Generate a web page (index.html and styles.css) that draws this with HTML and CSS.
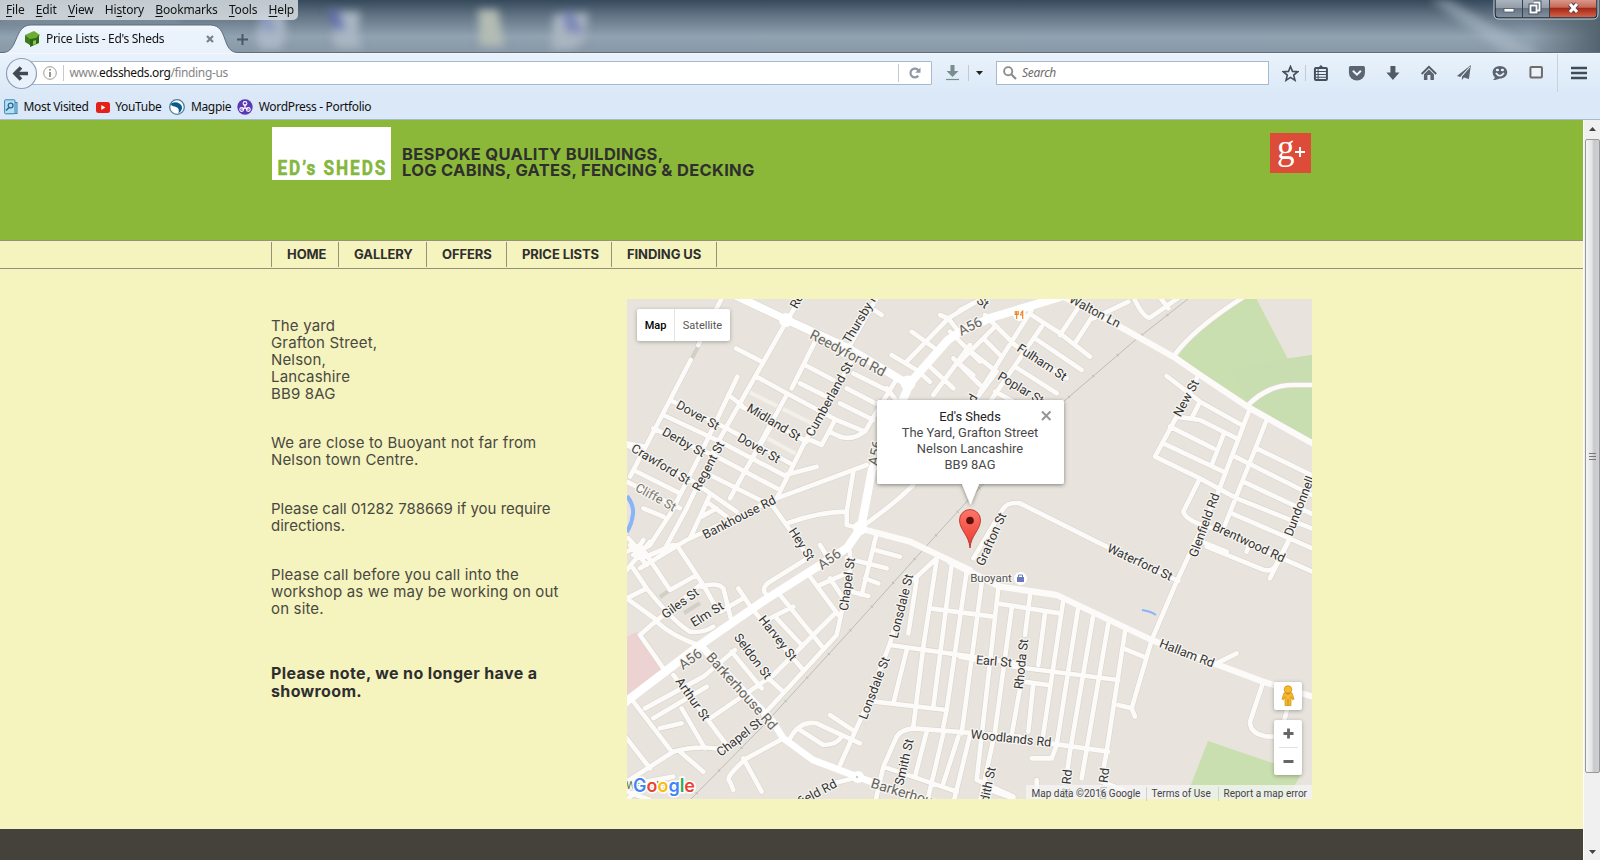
FILE: index.html
```html
<!DOCTYPE html>
<html lang="en">
<head>
<meta charset="utf-8">
<title>Price Lists - Ed's Sheds</title>
<link rel="stylesheet" href="styles.css">
</head>
<body>
<div class="window">
  <header class="titlebar">
    <svg class="glass" viewBox="0 0 1600 54" preserveAspectRatio="none">
      <defs>
        <linearGradient id="gGlass" x1="0" y1="0" x2="0" y2="1"><stop offset="0" stop-color="#364a5c"/><stop offset=".3" stop-color="#647686"/><stop offset=".68" stop-color="#91a2b1"/><stop offset="1" stop-color="#8797a5"/></linearGradient>
        <linearGradient id="gEdge" x1="0" x2="1"><stop offset="0" stop-color="#53606a" stop-opacity="0"/><stop offset="1" stop-color="#53636f"/></linearGradient>
        <filter id="soft" x="-40%" y="-40%" width="180%" height="180%"><feGaussianBlur stdDeviation="4"/></filter>
        <linearGradient id="gTab" x1="0" y1="0" x2="0" y2="1"><stop offset="0" stop-color="#f3f8fd"/><stop offset=".3" stop-color="#eaf2fb"/><stop offset="1" stop-color="#e9f2fb"/></linearGradient>
      </defs>
      <rect width="1600" height="54" fill="url(#gGlass)"/>
      <rect width="180" height="22" fill="#8d9aa4" opacity=".6" filter="url(#soft)"/>
      <rect x="1530" width="70" height="54" fill="url(#gEdge)"/>
      <g filter="url(#soft)">
        <path d="M1430 0h20l90 54h-34z" fill="#b4c0cc" opacity=".5"/>
        <path d="M262 14h22l2 22-6 13h-20l-4-12z" fill="#aab7c6"/><path d="M256 12h14l8 18-14 2z" fill="#7f8ebb" opacity=".7"/>
        <path d="M338 12h22l-2 22 4 14h-26l-4-12z" fill="#a9b6c3"/><path d="M326 10h14l6 20h-12z" fill="#5f6cab" opacity=".8"/>
        <path d="M478 10h20l6 36h-24z" fill="#b4bcb4"/>
        <path d="M554 15l34-2-3 26-12 10h-22z" fill="#aab5c1"/><path d="M562 12h12l10 22-18-2z" fill="#727db4" opacity=".8"/>
      </g>
      <path d="M0 52.500H3C18 52.500 14 26 30 25H211C229 26 221 52.500 238 52.500H1600V54H0Z" fill="url(#gTab)" stroke="#5d6d80"/>
      <rect y="53" width="1600" height="1" fill="#f2f7fc"/>
    </svg>
    <nav class="menus"><span><u>F</u>ile</span><span><u>E</u>dit</span><span><u>V</u>iew</span><span>Hi<u>s</u>tory</span><span><u>B</u>ookmarks</span><span><u>T</u>ools</span><span><u>H</u>elp</span></nav>
    <div class="tabs">
      <svg width="16" height="16" viewBox="0 0 16 16"><path d="M1 4L10 0l6 4-4 5L5 8z" fill="#6cab35"/><path d="M1 4l5 4v6l-5-3z" fill="#3d7a1c"/><path d="M6 8l6-1 3-3v8l-9 4z" fill="#2f6716"/><path d="M9 10l3-1v4l-3 1z" fill="#8cc653"/></svg>
      <span class="tab-title">Price Lists - Ed's Sheds</span>
      <svg width="8" height="8" viewBox="0 0 8 8"><path d="M1 1l6 6M7 1L1 7" stroke="#76828e" stroke-width="2.200"/></svg>
      <svg class="plus" width="11" height="11" viewBox="0 0 11 11"><path d="M5.500 0v11M0 5.500h11" stroke="#4b5864" stroke-width="2"/></svg>
    </div>
    <svg class="winbtns" width="106" height="20" viewBox="0 0 106 20">
      <defs><linearGradient id="gBtn" x1="0" y1="0" x2="0" y2="1"><stop offset="0" stop-color="#aeb8c1"/><stop offset=".45" stop-color="#929eaa"/><stop offset=".5" stop-color="#667584"/><stop offset="1" stop-color="#8592a0"/></linearGradient>
      <linearGradient id="gClose" x1="0" y1="0" x2="0" y2="1"><stop offset="0" stop-color="#d9988a"/><stop offset=".42" stop-color="#c66a58"/><stop offset=".5" stop-color="#a52a16"/><stop offset="1" stop-color="#d2604a"/></linearGradient></defs>
      <path d="M2 -1H104V14q0 4-4 4H6q-4 0-4-4z" fill="url(#gBtn)" stroke="#222e38" stroke-width="1.500"/>
      <path d="M57 0H103V14q0 3-3 3H57z" fill="url(#gClose)"/>
      <path d="M1 0V14q0 5 5 5H100q5 0 5-5V0" fill="none" stroke="#c9d2da" stroke-width="1"/>
      <path d="M29.500 0V17M56.500 0V17" stroke="#35424f"/>
      <rect x="11" y="8.500" width="10" height="3.500" fill="#fff" stroke="#4b5766" stroke-width=".8"/>
      <g transform="translate(2 0)"><path d="M38.500 2.500h6v8h-2M35.500 5.500h6v7h-6z" fill="none" stroke="#475362" stroke-width="4"/><path d="M38.500 2.500h6v8h-2M35.500 5.500h6v7h-6z" fill="none" stroke="#fff" stroke-width="1.900"/></g>
      <g transform="translate(2 0)"><path d="M75 4l7 8M82 4l-7 8" stroke="#5f4048" stroke-width="5"/><path d="M75 4l7 8M82 4l-7 8" stroke="#fff" stroke-width="3"/></g>
    </svg>
  </header>

  <div class="toolbar">
    <svg class="back" width="33" height="33" viewBox="0 0 33 33"><circle cx="16.500" cy="16.500" r="15" fill="#e9f2fb" stroke="#8ea1b8" stroke-width="1.200"/><path d="M10 16.500h13M16 10.500l-6 6 6 6" fill="none" stroke="#3f4a55" stroke-width="3.600"/></svg>
    <div class="urlbar">
      <svg width="14" height="14" viewBox="0 0 14 14"><circle cx="7" cy="7" r="6.300" fill="none" stroke="#9a9a9a"/><path d="M7 6v5" stroke="#8a8a8a" stroke-width="1.800"/><circle cx="7" cy="3.700" r="1" fill="#8a8a8a"/></svg>
      <i class="sep"></i>
      <span class="url">www.<b>edssheds.org</b>/finding-us</span>
      <i class="sep tall"></i>
      <svg class="reload" width="12" height="12" viewBox="0 0 12 12"><path d="M9.500 3.500A4.400 4.400 0 1 0 9.300 8.800" fill="none" stroke="#8d99a6" stroke-width="2.200"/><path d="M11.500.5v5.300H6.200z" fill="#8d99a6"/></svg>
    </div>
    <svg class="dl" width="13" height="16" viewBox="0 0 13 16"><path d="M4.500 0h4v6h4L6.500 12 .5 6h4z" fill="#7a8e8f"/><path d="M0 14.500h13" stroke="#7a8e8f" stroke-width="1.200"/></svg>
    <i class="sep dlsep"></i>
    <svg class="caret" width="7" height="4" viewBox="0 0 7 4"><path d="M0 0h7L3.500 4z" fill="#222"/></svg>
    <div class="search"><svg width="14" height="14" viewBox="0 0 14 14"><circle cx="5.200" cy="5.200" r="4.100" fill="none" stroke="#8c8c8c" stroke-width="1.900"/><path d="M8.500 8.500l4.500 4.500" stroke="#8c8c8c" stroke-width="2.200"/></svg><span>Search</span></div>
    <svg class="star" width="17" height="17" viewBox="0 0 17 17"><path d="M8.500 1.500l2 4.900 5.200.3-4 3.400 1.300 5.200-4.500-2.900L4 15.300l1.300-5.200-4-3.400 5.200-.3z" fill="none" stroke="#454f5b" stroke-width="1.600"/></svg>
    <i class="sep starsep"></i>
    <div class="tools">
      <svg width="16" height="16" viewBox="0 0 16 16"><rect x="2" y="3" width="12" height="12" rx="1" fill="none" stroke="#454f5b" stroke-width="2"/><path d="M4.500 3.500L8 0l3.500 3.500z" fill="#454f5b"/><path d="M3 6.500h10M3 9.500h10M3 12.200h10" stroke="#454f5b" stroke-width="1.100"/><path d="M5.200 4v10" stroke="#454f5b"/></svg>
      <svg width="16" height="16" viewBox="0 0 16 16"><path d="M0 2.500Q0 1 1.500 1h13Q16 1 16 2.500V8a8 7.500 0 0 1-16 0z" fill="#5b6571"/><path d="M4 5.800L8 9.600l4-3.800" fill="none" stroke="#f0f5fa" stroke-width="2"/></svg>
      <svg width="16" height="16" viewBox="0 0 16 16"><path d="M5.500 1h5v6.500h4L8 15 1.500 7.500h4z" fill="#505b67"/></svg>
      <svg width="16" height="16" viewBox="0 0 16 16"><path d="M.7 9L8 1.800 15.300 9" fill="none" stroke="#505b67" stroke-width="1.800"/><path d="M3 9.300L8 4.400l5 4.900V15H9.500v-5h-3v5H3z" fill="#5b6571"/></svg>
      <svg width="16" height="16" viewBox="0 0 16 16"><path d="M15 0L1 11l3.500 1zM15 0L6 11.500V15l2-2.500 5 1.500z" fill="#5b6571"/><path d="M14 2L5 12" stroke="#eef4fa" stroke-width=".9"/></svg>
      <svg width="16" height="16" viewBox="0 0 16 16"><path d="M8 1c4 0 7.300 2.800 7.300 6.200S12 13.500 8 13.500c-2 .9-4 1.500-7 1.500 1.500-1 2-2 1.800-3C1.500 11 .7 9 .7 7.200.7 3.800 4 1 8 1z" fill="#5b6571"/><path d="M4 8q4 5.500 8 0" fill="none" stroke="#eef4fa" stroke-width="1.700"/><ellipse cx="5.500" cy="5" rx="1.600" ry="1.300" fill="#eef4fa"/><ellipse cx="10.500" cy="5" rx="1.600" ry="1.300" fill="#eef4fa"/></svg>
      <svg width="16" height="16" viewBox="0 0 16 16"><rect x="2.500" y="2" width="11.500" height="10.500" rx="1" fill="#edf3fa" stroke="#6d6c69" stroke-width="2"/></svg>
    </div>
    <i class="menusep"></i>
    <svg class="burger" width="16" height="14" viewBox="0 0 16 14"><path d="M0 2h16M0 7h16M0 12h16" stroke="#404c58" stroke-width="2.600"/></svg>
  </div>

  <div class="bookmarks">
    <svg width="14" height="16" viewBox="0 0 14 16"><rect x="3" y="3.500" width="10" height="11" fill="#a5d4ea" stroke="#3b81ab"/><rect x=".6" y=".8" width="10.400" height="14" rx="1" fill="#b4e0f2" stroke="#3c86b1"/><circle cx="6.600" cy="6.500" r="2.400" fill="none" stroke="#2c6796" stroke-width="1.300"/><path d="M5 8.500L2 11.500" stroke="#2c6796" stroke-width="1.600"/></svg><span>Most Visited</span>
    <svg width="14" height="11" viewBox="0 0 14 11"><rect width="14" height="11" rx="2.500" fill="#e32119"/><path d="M5.300 3v5l4-2.500z" fill="#fff"/></svg><span>YouTube</span>
    <svg class="magpie" width="16" height="16" viewBox="0 0 16 16"><circle cx="8" cy="8" r="7.300" fill="#fff" stroke="#4b7ea0" stroke-width="1.300"/><path d="M1.500 5Q4 2.500 8.500 3.500 13.500 5.500 13 9.500 12.500 12.500 9.500 14.500 10.500 10.500 8.500 8.800 6.500 7.500 4.500 7.300 2.500 7 1.500 5z" fill="#075a8b"/></svg><span>Magpie</span>
    <svg class="wp" width="16" height="16" viewBox="0 0 16 16"><circle cx="8" cy="8" r="7.700" fill="#5a38b5"/><path d="M8 5v4M4.500 10.500L8 9l3.500 1.500" stroke="#fff" stroke-width="1.300" fill="none"/><circle cx="8" cy="4.500" r="1.900" fill="none" stroke="#fff" stroke-width="1.100"/><circle cx="4.700" cy="10.500" r="1.900" fill="none" stroke="#fff" stroke-width="1.100"/><circle cx="11.300" cy="10.500" r="1.900" fill="none" stroke="#fff" stroke-width="1.100"/></svg><span>WordPress - Portfolio</span>
  </div>

  <div class="viewport">
    <div class="page">
      <div class="masthead">
        <svg class="logo" width="119" height="53" viewBox="0 0 119 53"><rect width="119" height="53" fill="#fff"/><text transform="translate(5.500 47.500) scale(.84 1)">ED’s SHEDS</text></svg>
        <div class="tagline"><div class="t1">BESPOKE QUALITY BUILDINGS,</div><div class="t2">LOG CABINS, GATES, FENCING &amp; DECKING</div></div>
        <svg class="gplus" width="41" height="40" viewBox="0 0 41 40"><rect width="41" height="40" fill="#dd4b39"/><text x="7" y="26">g</text><path d="M30 14v10M25 19h10" stroke="#fff" stroke-width="1.900"/></svg>
      </div>
      <nav class="sitenav"><a class="n1">HOME</a><a class="n2">GALLERY</a><a class="n3">OFFERS</a><a class="n4">PRICE LISTS</a><a class="n5">FINDING US</a></nav>
      <main class="content">
        <section class="info">
          <p>The yard<br>Grafton Street,<br>Nelson,<br>Lancashire<br>BB9 8AG</p>
          <p>We are close to Buoyant not far from<br>Nelson town Centre.</p>
          <p class="tight">Please call 01282 788669 if you require<br>directions.</p>
          <p>Please call before you call into the<br>workshop as we may be working on out<br>on site.</p>
          <p class="note">Please note, we no longer have a<br>showroom.</p>
        </section>
        <section class="map">
          <svg class="tiles" width="685" height="500" viewBox="627 299 685 500">
            <defs>
              <g id="minor">
                <g transform="translate(620 295) scale(.33333)">
                  <path d="M310 0L235 150M212 195L150 315 30 545M548 0L500 78 300 430 200 640 130 770M352 245L240 480 155 650 90 750 40 780M348 160L425 200M325 300L365 330M775 0L690 150 670 180M740 30L785 60M695 200L560 430 470 610M585 140L515 280M555 210L640 255M540 265L620 305M700 235L810 290M680 280L785 335M660 325L760 375M410 245L500 295 650 375 735 410 770 350 825 260M560 430L605 450 645 375M630 410Q690 450 738 405M365 335L560 440M500 300L330 610M450 400L380 520M150 315L320 400 510 505M130 360L300 440 500 545M100 400L300 490 480 585M20 450L220 560 350 650M250 530L460 635 510 705 560 780M20 445L75 455M40 525L180 595M20 560L180 640M70 640L130 665M740 510L470 610 200 735 60 820M495 540L590 515M500 685Q600 650 680 650L700 530M680 650V690L720 700M720 700L760 670Q830 620 880 570M270 600L210 730M245 665L290 640M260 620L320 665M600 750L625 790M985 70L1060 25M985 70L860 200M875 110L945 160M815 180L890 225 930 260M985 70L1020 115M1050 150L940 300M930 215L1000 280M865 270L840 330 800 280M1010 200L1060 240M960 60L985 70M25 730L75 785M70 735L50 765"/>
                </g>
                <g transform="translate(960 295) scale(.33333)">
                  <path d="M0 45L80 5M75 60L165 150 320 250M215 45L60 290M245 95L90 320M105 95L0 200M20 160L110 230 50 310M70 130L125 185M-30 110L60 200M-20 190L60 270M215 60L300 115 390 185M225 130L365 225M165 215L290 295M105 290L170 325M360 30L300 120M400 60L345 145M400 70L505 20M520 5Q550 70 570 68L660 5M595 0L625 40M640 185Q700 100 860 0M860 335Q920 270 1000 270H1080M715 240L690 290 650 365 585 485 720 550 830 610 1080 710M620 243L720 320 845 390M720 320L695 370M650 365L720 375 830 430M630 395L760 460M610 445L790 530M790 420L755 510M870 340L775 590 650 860 575 1035M920 375L795 690M890 460L1080 553M825 485L1080 612M850 560L1080 668M720 550L670 650Q680 680 760 700L1080 840M815 655L1080 770M1070 530L980 750 930 850M725 740L800 770M870 740L860 770M40 790L130 640Q145 620 180 625L420 745 655 858"/>
                  <path d="M290 -5L350 25 480 95 640 185 720 240 870 340 1080 458" stroke-width="19"/>
                </g>
                <g transform="translate(620 545) scale(.33333)">
                  <path d="M20 75L90 -10M30 0L80 60M20 20L60 0 150 135 230 90M80 130L20 160 110 225M80 130L40 70M80 130Q160 230 210 260 250 265 280 245M110 230Q160 275 235 300M60 270L130 370M60 270L100 235 240 120M90 30L160 0M170 0L250 120 290 190M245 125Q290 110 310 130L335 230M355 130L395 190M300 200L370 160M395 190L545 370M480 150L610 310M440 150Q420 130 450 110L570 35M440 225L520 185M470 220L545 300M570 95L655 210M600 120L690 80M630 100L670 160M665 200L650 270 430 510M690 60L690 20M640 210L460 390 270 520M440 395L490 440M335 320L425 430M250 395L345 315M75 490L250 395M100 520L260 425M40 470L155 620M160 390L260 520 320 600M185 490L255 610M120 550L185 535M20 580L90 670M20 710L160 620 Q230 600 300 612M180 620L250 680M490 580L380 640Q310 700 330 710L340 735M370 640L425 740M20 765L80 710 160 695M20 740L90 765M640 715L720 695"/>
                </g>
                <g transform="translate(780 480) scale(.33333)">
                  <path d="M290 160L245 345M285 210L360 230M200 235L320 265M255 295L295 310M215 335L265 348M30 775Q60 720 110 730L240 790M60 750L130 795Q170 795 185 770M150 705L225 755M180 855L250 700 330 490M470 235L400 300M410 300L385 460M470 240L430 500 400 740M515 255L460 680M560 275L500 690 490 740M605 310L545 760M655 325L590 900 700 950M450 385L640 410M330 495L720 550M330 490L350 420M285 665L500 690M380 510L340 670M285 970L310 860 350 770Q360 750 400 745L720 770M310 860L530 935M440 755L405 890M490 760L445 950M535 770L490 910M570 765L520 970"/>
                  <path d="M240 145L390 185 570 270" stroke-width="19"/>
                </g>
                <g transform="translate(960 545) scale(.33333)">
                  <path d="M155 190L105 560 60 770M210 150L195 270M180 430L155 570M310 165L245 600M255 205L235 360M220 415L205 560M355 185L290 600 275 640H215M400 210L330 620 320 690M445 235L365 700M495 260L440 620 425 700M110 175L300 205M0 335L50 345M160 365L475 405M190 410L265 420M270 595L445 620M490 310L550 335M475 480L515 490M575 285L515 490 525 515M740 5L900 70Q930 85 945 65L990 -20M770 355L830 325M910 410L870 530Q870 570 930 575H960L985 480M230 705V770M90 735L160 760M425 710L490 735"/>
                  <path d="M-30 50L40 85 120 125 290 150 575 285 910 410 1080 462" stroke-width="19"/>
                </g>
              </g>
              <g id="major">
                <path d="M730 293L787 320 848 348 908 384"/>
                <path d="M1060 297L990 318 960 332 948 340 910 383 888 435 872 470 861 528 847 548 817 567 765 600 700 645 615 710" stroke-width="8.500"/>
                <path d="M703 648L773 722 783 738 813 760 858 777 922 800" stroke-width="7"/>
              </g>
              <filter id="glow" x="-20%" y="-20%" width="140%" height="140%"><feDropShadow dx="0" dy="1" stdDeviation="2" flood-opacity=".45"/></filter>
              <linearGradient id="gPin" x1="0" y1="0" x2="0" y2="1"><stop offset="0" stop-color="#fe7569"/><stop offset="1" stop-color="#ea3a2e"/></linearGradient>
            </defs>
            <rect x="627" y="299" width="685" height="500" fill="#e8e4dd"/>
            <path d="M1244 299h12.500L1288 359 1312 355V442L1250 408 1178 356Q1195 331 1244 299z" fill="#cadfaf"/>
            <path d="M1231 370q30-8 59-12l22-3v87l-62-34z" fill="#c8deb1"/>
            <path d="M1208 741L1302 773 1286 800H1185z" fill="#c9dfaf"/>
            <path d="M627 637L636 632 664 670 627 695z" fill="#ecd2d0"/>
            <path d="M627 496q7 9 6 18t-6 18" fill="none" stroke="#8ab4f8" stroke-width="4"/>
            <path d="M1142 610q8 1 14 5" fill="none" stroke="#8ab4f8" stroke-width="2"/>
            <path d="M1193 295L1133 342 1063 402 970 498 920 553 848 633 762 727 690 800" fill="none" stroke="#bcbcb9" stroke-width="1"/>
            <path d="M1193 295L1133 342 1063 402 970 498 920 553 848 633 762 727 690 800" fill="none" stroke="#bcbcb9" stroke-width="3" stroke-dasharray="1 31"/>
            <path d="M699 345L691 360M660 597l10-7M684 613l16-10" stroke="#d2cfc5" stroke-width="4"/>
            <path d="M749 392L815 425M765 437L798 455" stroke="#f2f0e9" stroke-width="4"/>
            <use href="#minor" class="casing"/>
            <use href="#major" class="casing-major"/>
            <use href="#minor" class="fill"/>
            <use href="#major" class="fill-major"/>
            <circle cx="786" cy="320" r="7" fill="#fff"/><circle cx="908" cy="383" r="7.500" fill="#fff"/><circle cx="860" cy="528" r="7" fill="#fff"/><circle cx="858" cy="777" r="6" fill="#fff"/><circle cx="857" cy="777" r="1.200" fill="#ccc"/>
            <g class="labels">
              <text transform="translate(698 415) rotate(29)">Dover St</text>
              <text transform="translate(684 442) rotate(29)">Derby St</text>
              <text transform="translate(661 464) rotate(31)">Crawford St</text>
              <text class="dim" transform="translate(656 497) rotate(29)">Cliffe St</text>
              <text transform="translate(708 466) rotate(-62)">Regent St</text>
              <text transform="translate(774 422) rotate(31)">Midland St</text>
              <text transform="translate(759 448) rotate(30)">Dover St</text>
              <text transform="translate(829 399) rotate(-61)">Cumberland St</text>
              <text transform="translate(862 315) rotate(-59)">Thursby Rd</text>
              <text transform="translate(798 298) rotate(-62)">Reg</text>
              <text class="big" transform="translate(848 353) rotate(28)">Reedyford Rd</text>
              <text transform="translate(739 517) rotate(-27)">Bankhouse Rd</text>
              <text transform="translate(802 544) rotate(57)">Hey St</text>
              <text class="big" transform="translate(829 559) rotate(-36)">A56</text>
              <text class="big" transform="translate(690 659) rotate(-36)">A56</text>
              <text class="big" transform="translate(970 326) rotate(-27)">A56</text>
              <text class="big" transform="translate(875 453) rotate(-78)">A56</text>
              <text transform="translate(847 584) rotate(-82)">Chapel St</text>
              <text transform="translate(680 603) rotate(-36)">Giles St</text>
              <text transform="translate(707 614) rotate(-32)">Elm St</text>
              <text transform="translate(778 638) rotate(52)">Harvey St</text>
              <text transform="translate(753 656) rotate(53)">Seldon St</text>
              <text class="big" transform="translate(742 691) rotate(48)">Barkerhouse Rd</text>
              <text transform="translate(693 699) rotate(55)">Arthur St</text>
              <text transform="translate(739 737) rotate(-38)">Chapel St</text>
              <text transform="translate(901 606) rotate(-76)">Lonsdale St</text>
              <text transform="translate(874 688) rotate(-69)">Lonsdale St</text>
              <text transform="translate(904 762) rotate(-77)">Smith St</text>
              <text transform="translate(814 794) rotate(-28)">nfield Rd</text>
              <text class="big" transform="translate(909 794) rotate(17)">Barkerhouse</text>
              <text transform="translate(991 539) rotate(-66)">Grafton St</text>
              <text class="poi" transform="translate(991 578)">Buoyant</text>
              <text transform="translate(994 661) rotate(5)">Earl St</text>
              <text transform="translate(1021 664) rotate(-84)">Rhoda St</text>
              <text transform="translate(1011 738) rotate(6)">Woodlands Rd</text>
              <text transform="translate(1140 562) rotate(25)">Waterford St</text>
              <text transform="translate(1187 653) rotate(21)">Hallam Rd</text>
              <text transform="translate(987 788) rotate(-78)">Edith St</text>
              <text transform="translate(1066 784) rotate(-84)">nt Rd</text>
              <text transform="translate(1103 784) rotate(-84)">on Rd</text>
              <text transform="translate(1095 311) rotate(28)">Walton Ln</text>
              <text transform="translate(1042 362) rotate(33)">Fulham St</text>
              <text transform="translate(1021 388) rotate(31)">Poplar St</text>
              <text transform="translate(983 302) rotate(35)">St</text>
              <text transform="translate(969 404) rotate(-60)">and</text>
              <text transform="translate(1186 398) rotate(-62)">New St</text>
              <text transform="translate(1204 525) rotate(-70)">Glenfield Rd</text>
              <text transform="translate(1249 542) rotate(25)">Brentwood Rd</text>
              <text transform="translate(1299 506) rotate(-69)">Dundonnell</text>
              <text class="green" transform="translate(648 785)">Waverley</text>
            </g>
            <circle cx="1019.500" cy="314.500" r="6.500" fill="#fff"/><path d="M1018.200 311v3.500h-3V311M1016.700 311v8M1022.700 319v-8q-2 1-2 4h2" stroke="#ef7d17" stroke-width="1.100" fill="none"/>
            <circle cx="1020.500" cy="578.500" r="6.500" fill="#fff"/><rect x="1017" y="577" width="7" height="5" fill="#6a79bd"/><path d="M1018.500 577v-2h4v2" fill="none" stroke="#6a79bd"/>
            <path d="M970 548C969 535 959.500 530 959.500 520A10.500 10.500 0 0 1 980.500 520C980.500 530 971 535 970 548z" fill="url(#gPin)" stroke="#b3271e" stroke-width=".8"/><circle cx="970" cy="520.500" r="3.800" fill="#5c100d"/>
            <path class="bubble" d="M879 400H1062Q1064 400 1064 402V482Q1064 484 1062 484H979L970.500 505 962 484H879Q877 484 877 482V402Q877 400 879 400z" fill="#fff" filter="url(#glow)"/>
            <path d="M1042 411.500l8.500 8.500M1050.500 411.500l-8.500 8.500" stroke="#959595" stroke-width="2"/>
            <g class="bubbletext"><text class="bold" x="970" y="421">Ed's Sheds</text><text x="970" y="437">The Yard, Grafton Street</text><text x="970" y="453">Nelson Lancashire</text><text x="970" y="469">BB9 8AG</text></g>
            <text class="glogo" x="633" y="792" textLength="62" lengthAdjust="spacingAndGlyphs"><tspan fill="#4285f4">G</tspan><tspan fill="#ea4335">o</tspan><tspan fill="#fbbc05">o</tspan><tspan fill="#4285f4">g</tspan><tspan fill="#34a853">l</tspan><tspan fill="#ea4335">e</tspan></text>
          </svg>
          <div class="maptype"><span class="on">Map</span><span>Satellite</span></div>
          <div class="controls">
            <div class="pegman"><svg width="14" height="22" viewBox="0 0 14 22"><path d="M3 8q4-2 8 0l2 6-1.500.8-1.500-3V20.500H4V11.800l-1.500 3L1 14z" fill="#f7b92c" stroke="#c88a14" stroke-width=".7"/><circle cx="7" cy="4.500" r="3.800" fill="#f7b92c" stroke="#c88a14" stroke-width=".7"/><path d="M7 14v6.500" stroke="#c88a14"/><path d="M4.500 8h5L7 10z" fill="#d9822b"/></svg></div>
            <div class="zoomer"><svg width="28" height="55" viewBox="0 0 28 55"><path d="M14.500 8.500v10M9.500 13.500h10M9.500 41.500h10" stroke="#666" stroke-width="2.800"/><path d="M5 27.500h19" stroke="#e2e2e2"/></svg></div>
          </div>
          <div class="attribution"><span class="a1">Map data ©2016 Google</span><span class="a2">Terms of Use</span><span>Report a map error</span></div>
        </section>
      </main>
      <footer class="foot"></footer>
    </div>
    <div class="scrollbar">
      <svg width="7" height="4" viewBox="0 0 7 4"><path d="M3.500 0L7 4H0z" fill="#444"/></svg>
      <div class="thumb"><i></i><i></i><i></i></div>
      <svg class="down" width="7" height="4" viewBox="0 0 7 4"><path d="M0 0h7L3.500 4z" fill="#444"/></svg>
    </div>
  </div>
</div>
</body>
</html>
```
FILE: styles.css
```css
* { box-sizing: border-box; }
body { margin: 0; overflow: hidden; font-family: "Noto Sans", "Open Sans", sans-serif; font-size: 12px; color: #111; }
svg { display: block; flex: none; }
.window { width: 1600px; height: 860px; display: flex; flex-direction: column; }
.titlebar { height: 54px; position: relative; flex: none; }
.glass { position: absolute; inset: 0; width: 1600px; height: 54px; }
.menus { position: relative; width: 298px; height: 20px; display: flex; padding-left: 6px; background: rgba(211, 217, 222, .88); border-radius: 0 0 5px 0; line-height: 20px; letter-spacing: -.17px; }
.menus span { margin-right: 11.3px; white-space: nowrap; }
.menus u { text-underline-offset: 2px; }
.tabs { position: relative; height: 34px; display: flex; align-items: center; padding: 6px 0 0 24px; }
.tabs svg { margin-top: -2px; }
.tab-title { width: 160px; margin-left: 6px; white-space: nowrap; line-height: 20px; margin-top: -2px; letter-spacing: -.3px; }
.plus { margin-left: 23px; }
.winbtns { position: absolute; right: 1px; top: 0; }
.toolbar { height: 39px; flex: none; display: flex; align-items: center; padding-bottom: 1px; background: linear-gradient(#e9f2fb, #dbe9f8); }
.back { margin-left: 4.500px; margin-right: -8px; z-index: 1; }
.urlbar { width: 902px; height: 24px; flex: none; display: flex; align-items: center; background: #fff; border: 1px solid #a8b9cd; border-radius: 1px; padding-left: 12px; }
.sep { width: 1px; height: 16px; flex: none; background: #c3c9d0; margin-left: 6px; }
.tall { height: 18px; margin-left: auto; }
.url { margin-left: 6px; color: #858585; line-height: 20px; letter-spacing: -.36px; }
.url b { color: #111; font-weight: 400; }
.reload { margin: 0 10px 0 10px; }
.dl { margin-left: 14.500px; }
.dlsep { margin-left: 9px; }
.caret { margin-left: 7px; }
.search { width: 273px; height: 24px; flex: none; display: flex; align-items: center; margin-left: 13px; padding-left: 6px; background: #fff; border: 1px solid #a8b9cd; color: #6c6c6c; font-style: italic; }
.search span { margin-left: 5px; line-height: 20px; letter-spacing: -.3px; }
.star { margin-left: 12.500px; }
.starsep { margin-left: 6px; }
.tools { display: flex; margin-left: -2.500px; }
.tools svg { width: 35.850px; }
.menusep { width: 1px; height: 38px; flex: none; background: #c5d2e0; margin-left: 3px; }
.burger { margin-left: 13px; }
.bookmarks { height: 27px; flex: none; display: flex; align-items: center; padding: 2px 0 0 4px; background: #dae8f7; border-bottom: 1px solid #a6bacf; letter-spacing: -.32px; }
.bookmarks span { margin: 0 7px 0 5.500px; white-space: nowrap; line-height: 20px; }
.magpie { margin-left: 1px; }
.wp { margin-left: -1px; }
.viewport { flex: 1; display: flex; min-height: 0; }
.page { width: 1583px; flex: none; display: flex; flex-direction: column; background: #f5f3be; font-family: Inter, sans-serif; color: #2f2f2f; }
.masthead { height: 120px; flex: none; display: flex; background: #8bb838; padding: 7px 272px 0; align-items: flex-start; }
.logo text { font: 700 20.500px Roboto, sans-serif; letter-spacing: 2.300px; fill: #84b73c; stroke: #84b73c; stroke-width: .5px; }
.tagline { margin: 19px 0 0 11px; font-weight: 700; font-size: 16.500px; line-height: 16px; letter-spacing: .3px; white-space: nowrap; }
.gplus { margin: 6px 0 0 auto; }
.gplus text { font: 400 35px "Liberation Serif", serif; fill: #fff; }
.sitenav { height: 29px; flex: none; display: flex; padding: 1px 0 1px 271px; border-top: 1px solid #94907c; border-bottom: 1px solid #94907c; font-size: 13px; letter-spacing: -.08px; font-weight: 700; }
.sitenav a { padding-left: 15px; line-height: 25px; border-left: 1px solid #94907c; height: 25px; white-space: nowrap; }
.n1 { width: 67px; } .n2 { width: 88px; } .n3 { width: 80px; } .n4 { width: 105px; } .sitenav .n5 { width: 106px; border-right: 1px solid #94907c; }
.content { height: 560px; flex: none; display: flex; padding: 30px 0 0 271px; }
.info { width: 356px; flex: none; padding-top: 18px; }
.info p { margin: 0 0 32px; font-size: 15px; line-height: 17px; font-weight: 400; letter-spacing: .16px; white-space: nowrap; color: #494941; }
.info .tight { letter-spacing: -.01px; }
.info .note { margin-top: 47px; font-weight: 700; font-size: 16px; line-height: 18px; letter-spacing: .36px; color: #2e2e2e; }
.map { width: 685px; height: 500px; position: relative; font-family: Roboto, sans-serif; }
.casing, .fill, .casing-major, .fill-major { fill: none; stroke-linecap: round; stroke-linejoin: round; }
.casing { stroke: #d9d4ca; stroke-width: 17.500; }
.fill { stroke: #fcfbf9; stroke-width: 14; }
.casing-major { stroke: #dad5cc; stroke-width: 9; }
.fill-major { stroke: #fff; stroke-width: 8; }
.labels text { font: 400 12.600px Roboto, sans-serif; fill: #333; text-anchor: middle; dominant-baseline: central; stroke: #f7f5f1; stroke-width: 2.500px; paint-order: stroke; stroke-linejoin: round; }
.labels .big { font-size: 14px; fill: #66655f; }
.labels .dim { fill: #77756f; }
.labels .poi { font-size: 11.500px; fill: #555; }
.labels .green { font-size: 11px; fill: #557a3d; }
.bubbletext text { font: 400 12.900px Roboto, sans-serif; fill: #4a4a4a; text-anchor: middle; }
.bubbletext .bold { fill: #222; }
.glogo { font: 600 18px Inter, sans-serif; stroke: #fff; stroke-width: 3px; paint-order: stroke; }
.maptype { position: absolute; left: 10px; top: 10px; width: 93px; height: 32px; display: flex; background: #fff; border-radius: 2px; box-shadow: 0 1px 4px rgba(0, 0, 0, .3); font-size: 11px; line-height: 33px; color: #565656; }
.maptype span { flex: 1; text-align: center; }
.maptype .on { flex: none; width: 38px; border-right: 1px solid #e4e4e4; font-weight: 500; color: #000; }
.controls { position: absolute; left: 647px; top: 383px; display: flex; flex-direction: column; gap: 10px; }
.pegman, .zoomer { width: 28px; height: 28px; background: #fff; border-radius: 2px; box-shadow: 0 1px 4px rgba(0, 0, 0, .3); display: flex; align-items: center; justify-content: center; }
.zoomer { height: 55px; }
.attribution { position: absolute; right: 0; bottom: 0; width: 286px; height: 14px; display: flex; align-items: center; background: rgba(245, 245, 245, .75); font-size: 10px; line-height: 14px; color: #444; padding-top: 3px; white-space: nowrap; }
.attribution span { padding-left: 4.500px; border-left: 1px solid transparent; }
.attribution .a1 { width: 120px; }
.attribution .a2 { width: 72px; }
.attribution .a2, .attribution .a2 + span { border-color: #ccd6c6; }
.foot { flex: 1; background: #45413b; }
.scrollbar { width: 17px; background: #f0f0f0; border-left: 1px solid #fff; display: flex; flex-direction: column; align-items: center; padding-top: 7px; }
.thumb { width: 15px; height: 634px; margin-top: 8px; border: 1px solid #979797; border-radius: 2px; background: linear-gradient(90deg, #f5f5f5, #e4e4e6 45%, #c8c9cd 60%, #cfd0d4); display: flex; flex-direction: column; align-items: center; justify-content: center; gap: 2px; }
.thumb i { width: 7px; height: 1px; background: #777; }
.down { margin: auto 0 6px; }
```
